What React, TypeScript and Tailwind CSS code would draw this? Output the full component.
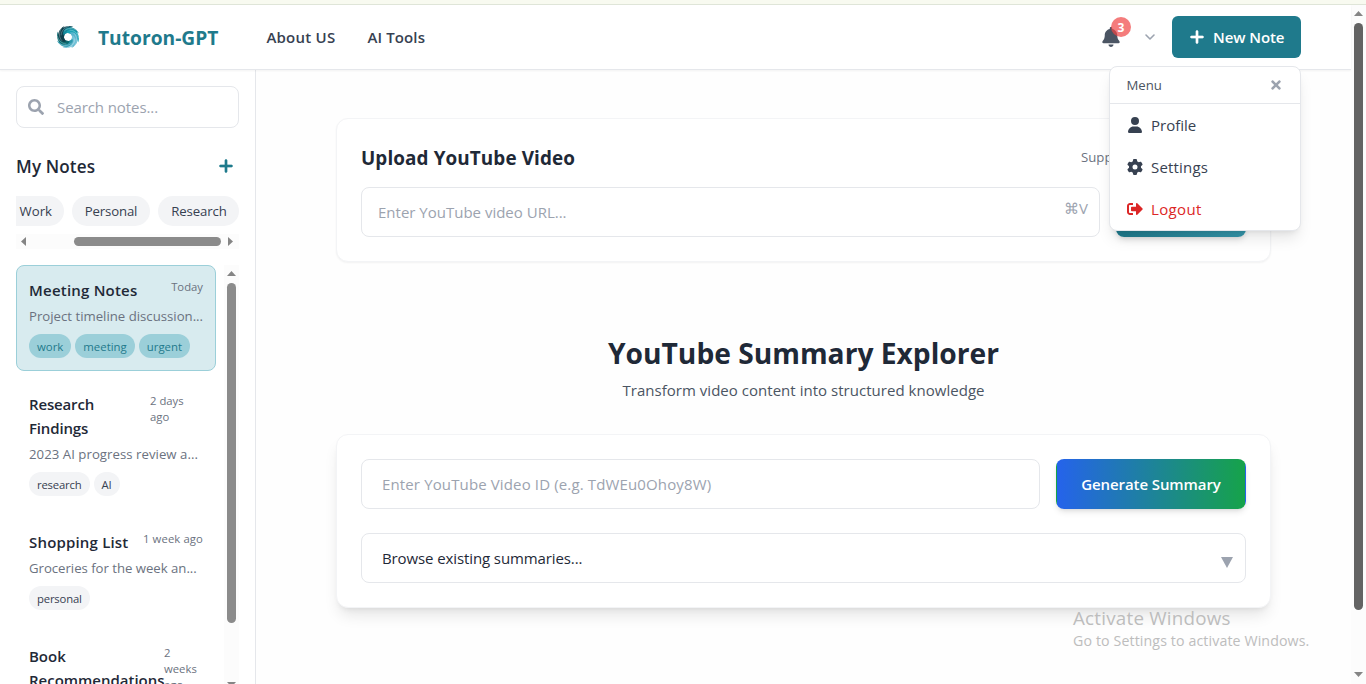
import React from "react";
import { FaPlus, FaBell, FaUser, FaGear } from "react-icons/fa6";
import { FaSearch, FaTimes, FaSignOutAlt } from "react-icons/fa";
import { ChevronDown } from "lucide-react";

const notes = [
  { title: "Meeting Notes", time: "Today", text: "Project timeline discussion...", tags: ["work", "meeting", "urgent"], active: true, tw: "w-auto", title_cls: "tracking-[0.014em]", text_cls: "" },
  { title: "Research Findings", time: "2 days ago", text: "2023 AI progress review a...", tags: ["research", "AI"], active: false, tw: "w-[53px]", title_cls: "tracking-[-0.01em]", text_cls: "tracking-[0.003em]" },
  { title: "Shopping List", time: "1 week ago", text: "Groceries for the week an...", tags: ["personal"], active: false, tw: "w-auto whitespace-nowrap tracking-[0.01em]", title_cls: "tracking-[0.012em]", text_cls: "tracking-[-0.002em]" },
  { title: "Book Recommendations", time: "2 weeks ago", text: "Must-read books for this...", tags: ["books"], active: false, tw: "w-[39px]", title_cls: "tracking-[-0.001em]", text_cls: "" },
];

function Logo() {
  const blades = [
    { a: 0, c: "#0d4a5a" },
    { a: 45, c: "#138a9c" },
    { a: 90, c: "#1aa3b5" },
    { a: 135, c: "#57b4cd" },
    { a: 180, c: "#76c3d8" },
    { a: 225, c: "#2b98ad" },
    { a: 270, c: "#0c6a70" },
    { a: 315, c: "#0f3f4b" },
  ];
  return (
    <svg viewBox="-12 -12 24 24" className="h-6 w-6">
      {blades.map((b) => (
        <path key={b.a} transform={`rotate(${b.a})`} d="M-7.6 -3 C-7.8 -8.8 -1.4 -12.6 5.4 -10.2 C1.6 -9.6 -2 -7.4 -2.8 -3.8 C-3.3 -2 -4 -0.4 -4.6 1.8 C-6.4 0.8 -7.5 -0.8 -7.6 -3Z" fill={b.c} />
      ))}
      {blades.map((b) => (
        <path key={b.a} transform={`rotate(${b.a})`} d="M-6.9 -1.6 C-6.9 -6 -3.6 -9.6 1.4 -10.8" fill="none" stroke="#ffffff" strokeOpacity="0.45" strokeWidth="0.6" />
      ))}
    </svg>
  );
}

function Header() {
  return (
    <header className="relative flex h-[65px] shrink-0 items-center border-b border-gray-200 bg-white pr-[50px] pl-14 shadow-[0_1px_2px_rgba(0,0,0,0.05)]">
      <Logo />
      <span className="ml-[18px] pt-[3px] text-[19.2px] font-bold text-[#1f7a8c]">Tutoron-GPT</span>
      <nav className="ml-12 flex gap-8 text-[15px] font-semibold text-[#374151]">
        <a className="tracking-[0.016em]">About US</a>
        <a className="tracking-[0.008em]">AI Tools</a>
      </nav>
      <div className="ml-auto flex items-center">
        <div className="relative">
          <FaBell className="h-5 w-[18px] text-[#4b5563]" />
          <span className="absolute -top-2.5 left-[9px] flex h-5 w-5 items-center justify-center rounded-full bg-[#ef4444]/70 pt-px text-[12px] font-bold text-white">3</span>
        </div>
        <ChevronDown className="ml-[22px] h-4 w-4 text-[#9ca3af]" strokeWidth={2.4} />
        <button className="ml-3.5 flex h-[42px] w-[129px] items-center gap-2 rounded-md bg-[#1f7a8c] pl-[17px] text-[15px] font-semibold tracking-[-0.005em] text-white">
          <FaPlus className="h-4 w-4" strokeWidth={22} stroke="currentColor" />
          New Note
        </button>
      </div>
      <Menu />
    </header>
  );
}

function Menu() {
  return (
    <div className="absolute top-[61px] right-[50px] z-20 w-48 rounded-lg border border-gray-200 bg-white shadow-lg">
      <div className="flex h-[37px] items-center justify-between border-b border-gray-200 pr-[17px] pl-[16.5px] text-[13.2px] text-[#4b5563]">
        <span className="pt-px">Menu</span>
        <FaTimes className="h-3.5 w-3.5 text-[#9ca3af]" />
      </div>
      <div className="text-[15px] text-[#374151]">
        <div className="flex h-[42px] items-center gap-2 px-[17px]"><FaUser className="h-4 w-4" />Profile</div>
        <div className="flex h-[42px] items-center gap-2 px-[17px] tracking-[0.012em]"><FaGear className="h-4 w-4" />Settings</div>
        <div className="flex h-[42px] items-center gap-2 px-[17px] tracking-[0.025em] text-[#dc2626]"><FaSignOutAlt className="h-4 w-4" />Logout</div>
      </div>
    </div>
  );
}

function Sidebar() {
  return (
    <aside className="flex w-64 shrink-0 flex-col border-r border-gray-200 p-4">
      <div className="flex h-[42px] shrink-0 items-center rounded-lg border border-gray-200 pl-[11px] text-[15px] tracking-[-0.006em] text-[#9ca3af]">
        <FaSearch className="mr-[13px] h-4 w-4" />
        Search notes...
      </div>
      <div className="mt-6 flex h-7 shrink-0 items-center justify-between pr-[5px]">
        <h2 className="pt-px text-[17.1px] font-semibold tracking-[0.008em] text-[#1f2937]">My Notes</h2>
        <FaPlus className="h-4 w-4 text-[#1f7a8c]" strokeWidth={22} stroke="currentColor" />
      </div>
      <div className="mt-4 flex h-[30px] shrink-0 justify-end gap-2 overflow-hidden text-[13.2px] text-[#374151]">
        <span className="flex w-[72px] shrink-0 items-center justify-end rounded-full bg-[#f3f4f6] pt-0.5 pr-3">Work</span>
        <span className="flex w-[78px] shrink-0 items-center justify-center rounded-full bg-[#f3f4f6] pt-0.5 tracking-[-0.01em]">Personal</span>
        <span className="flex w-[81px] shrink-0 items-center justify-center rounded-full bg-[#f3f4f6] pt-0.5 pl-px tracking-[-0.01em]">Research</span>
      </div>
      <div className="mt-2 flex h-[15px] shrink-0 items-center bg-[#fcfcfc] pr-[6px] pl-[5px]">
        <svg viewBox="0 0 5 9" className="h-[9px] w-[5px]"><path d="M5 0v9L0 4.5z" fill="#858585" /></svg>
        <div className="ml-[48px] h-[9px] w-[147px] rounded-full bg-[#8b8b8b]" />
        <svg viewBox="0 0 5 9" className="ml-auto h-[9px] w-[5px]"><path d="M0 0v9l5-4.5z" fill="#858585" /></svg>
      </div>
      <div className="mt-4 flex h-[425px] shrink-0 justify-between">
        <div className="flex w-[200px] flex-col gap-2">
          {notes.map((n) => (
            <article key={n.title} className={n.active ? "rounded-lg border border-[#9bcfd9] bg-[#d8ebef] p-3" : "rounded-lg border border-transparent p-3"}>
              <div className="flex items-start justify-between">
                <h3 className={n.title_cls + " w-min min-w-0 grow text-[15px] leading-6 font-semibold text-[#1f2937]"}>{n.title}</h3>
                <span className={n.tw + " shrink-0 pt-px text-[11.3px] leading-4 text-[#6b7280]"}>{n.time}</span>
              </div>
              <p className={n.text_cls + " mt-1 text-[13.2px] leading-5 whitespace-nowrap text-[#6b7280]"}>{n.text}</p>
              <div className="mt-2 flex gap-1">
                {n.tags.map((t) => (
                  <span key={t} className={n.active ? "flex h-6 items-center rounded-full bg-[#9bcfd9] px-2 pt-0.5 text-[11.4px] text-[#1f7a8c]" : "flex h-6 items-center rounded-full bg-[#f3f4f6] px-2 pt-0.5 text-[11.3px] tracking-[-0.015em] text-[#374151]"}>{t}</span>
                ))}
              </div>
            </article>
          ))}
        </div>
        <div className="flex w-[15px] flex-col items-center bg-[#fcfcfc] pt-[6px] pb-[3px]">
          <svg viewBox="0 0 9 5" className="h-[5px] w-[9px] shrink-0"><path d="M0 5h9L4.5 0z" fill="#858585" /></svg>
          <div className="mt-[7px] h-[340px] w-[9px] shrink-0 rounded-full bg-[#8b8b8b]" />
          <svg viewBox="0 0 9 5" className="mt-[59px] h-[5px] w-[9px] shrink-0"><path d="M0 0h9L4.5 5z" fill="#858585" /></svg>
        </div>
      </div>
    </aside>
  );
}

function Main() {
  return (
    <main className="min-w-0 flex-1 bg-[#fefefe] px-20 pt-12">
      <section className="rounded-xl border border-gray-100 bg-white p-6 shadow-[0_1px_2px_rgba(0,0,0,0.05)]">
        <div className="mb-4 flex h-7 items-center justify-between">
          <h2 className="pt-0.5 text-[18.9px] font-bold tracking-[0.005em] text-[#1f2937]">Upload YouTube Video</h2>
          <span className="w-[165px] pt-px text-[13.2px] whitespace-nowrap text-[#6b7280]">Supported: MP4, MOV</span>
        </div>
        <div className="flex gap-4">
          <div className="flex h-[50px] flex-1 items-center justify-between rounded-lg border border-gray-200 pr-[11px] pl-4 text-[15px] text-[#9ca3af]">
            <span>Enter YouTube video URL...</span>
            <span className="-mt-2">⌘V</span>
          </div>
          <div className="h-[50px] w-[130px] rounded-lg bg-linear-to-r from-[#1f7a8c] to-[#3596ab] shadow-md" />
        </div>
      </section>
      <div className="mt-[73px] text-center">
        <h1 className="text-[28.2px] leading-9 font-bold text-[#1f2937]">YouTube Summary Explorer</h1>
        <p className="mt-[7px] text-[15px] leading-6 tracking-[0.002em] text-[#4b5563]">Transform video content into structured knowledge</p>
      </div>
      <section className="mt-8 rounded-xl border border-gray-100 bg-white p-6 shadow-lg">
        <div className="flex gap-4 text-[15px]">
          <div className="flex h-[50px] flex-1 items-center rounded-lg border border-gray-200 pl-5 tracking-[0.009em] text-[#9ca3af]">Enter YouTube Video ID (e.g. TdWEu0Ohoy8W)</div>
          <button className="h-[50px] w-[190px] rounded-lg border border-transparent bg-[linear-gradient(to_right,#2563eb,#16a34a)] font-semibold tracking-[-0.006em] text-white shadow-md">Generate Summary</button>
        </div>
        <div className="mt-6 flex h-[50px] items-center justify-between rounded-lg border border-gray-200 pr-3 pl-5 text-[15px] tracking-[-0.007em] text-[#1f2937]">
          Browse existing summaries...
          <svg viewBox="0 0 12 11" className="mt-[8px] h-[11px] w-3"><path d="M0 0h12L6 11z" fill="#9ca3af" /></svg>
        </div>
      </section>
    </main>
  );
}

export default function App() {
  return (
    <div className="relative flex h-[684px] w-[1366px] flex-col overflow-hidden bg-white font-['Open_Sans','Noto_Sans',sans-serif]">
      <div className="h-[5px] shrink-0 border-b border-[#dfe5d8] bg-[#f8faf0]" />
      <div className="flex min-h-0 flex-1">
        <div className="flex min-w-0 flex-1 flex-col">
          <Header />
          <div className="flex min-h-0 flex-1 overflow-hidden">
            <Sidebar />
            <Main />
          </div>
        </div>
        <div className="flex w-[15px] shrink-0 flex-col items-center bg-[#fcfcfc] pt-[6px] pb-[7px]">
          <svg viewBox="0 0 9 5" className="h-[5px] w-[9px]"><path d="M0 5h9L4.5 0z" fill="#858585" /></svg>
          <div className="mt-[7px] h-[587px] w-[9px] rounded-full bg-[#636363]" />
          <svg viewBox="0 0 9 5" className="mt-auto h-[5px] w-[9px]"><path d="M0 0h9L4.5 5z" fill="#858585" /></svg>
        </div>
      </div>
      <div className="absolute top-[605px] left-[1073px] z-30 text-[#bdbdbd]">
        <div className="text-[18.8px] leading-[26px] tracking-[0.012em]">Activate Windows</div>
        <div className="text-[14.2px] leading-5 tracking-[0.008em]">Go to Settings to activate Windows.</div>
      </div>
    </div>
  );
}
